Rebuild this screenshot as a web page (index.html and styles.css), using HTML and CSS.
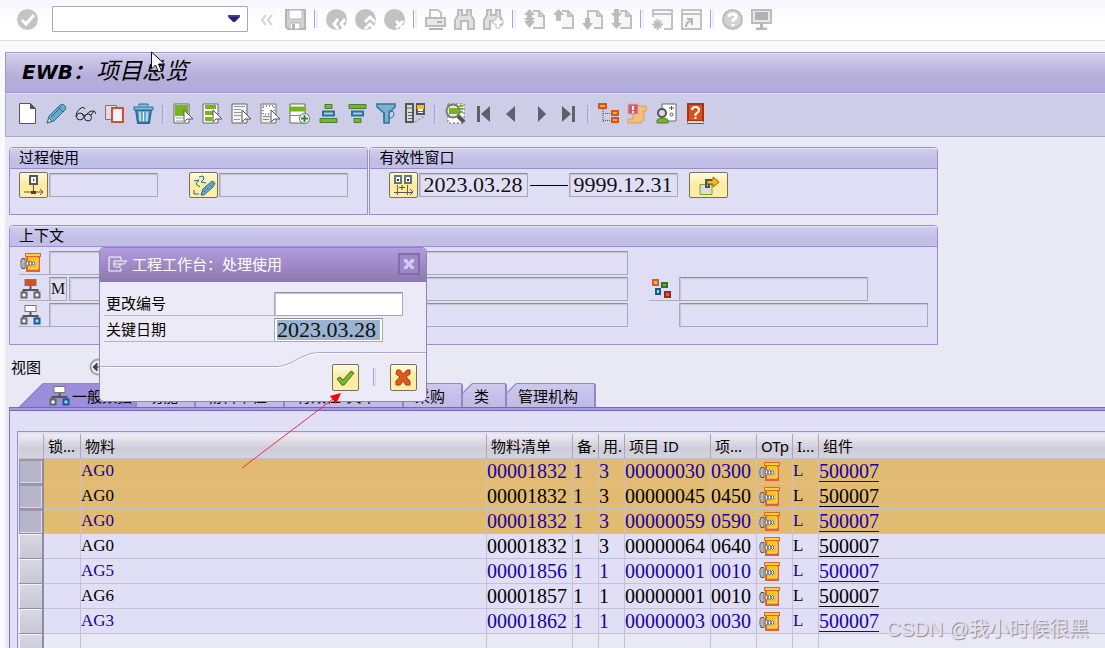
FILE: index.html
```html
<!DOCTYPE html>
<html lang="zh-CN">
<head>
<meta charset="utf-8">
<title>EWB：项目总览</title>
<link rel="stylesheet" href="styles.css">
</head>
<body>
<svg class="sprite" aria-hidden="true">
  <symbol id="material" viewBox="0 0 21 21">
    <path d="M5 1h16v4h-1v15H6V5H5z" fill="#e0652c"/><path d="M6 2h14v2H6z" fill="#ffd23c"/><path d="M8 5h10v12H8z" fill="#fcc31a"/><path d="M18 6v11H8" fill="none" stroke="#ffe68a"/>
    <path d="M5 9h9l2 2-2 3H5z" fill="#fff" /><path d="M2 6.500h3v10H2l-1-3V9z" fill="#e2e2e2" stroke="#555"/><path d="M3 7v9" stroke="#888"/>
    <g fill="#eee" stroke="#555"><ellipse cx="7.500" cy="11.500" rx="1.500" ry="2.500"/><ellipse cx="10.500" cy="11.500" rx="1.500" ry="2.300"/><ellipse cx="13.500" cy="11.500" rx="1.300" ry="2"/></g>
  </symbol>
  <symbol id="hierarchy" viewBox="0 0 21 21">
    <path d="M10.500 8v4M3.500 15v-3h14v3" fill="none" stroke="#555" stroke-width="2"/>
    <rect x="5" y="1.500" width="11" height="6" fill="currentColor" stroke="#777"/><rect x="1.500" y="14.500" width="5" height="5" fill="#fff" stroke="#666" stroke-width="2"/>
  </symbol>
  <symbol id="page-up" viewBox="0 0 21 21"><path d="M9 2h6l5 5v12H9" fill="#f7f7f8" stroke="#c0c0c0" stroke-width="2"/><path d="M15 1v6h6" fill="none" stroke="#c0c0c0" stroke-width="2"/></symbol>
</svg>

<header class="system-bar">
  <button aria-label="确认"><svg viewBox="0 0 21 21"><circle cx="10.500" cy="10.500" r="10.500" fill="#c4c4c4"/><path d="M5 11l4 4 8-9" fill="none" stroke="#fff" stroke-width="3"/></svg></button>
  <label class="command"><input aria-label="命令"><svg viewBox="0 0 12 8"><path d="M0 0h12v2l-5 5H5L0 2z" fill="#4d3d8f"/><path d="M1 2h10L6 7z" fill="#2e1d68"/></svg></label>
  <button class="collapse" aria-label="收起"><svg viewBox="0 0 13 21"><path d="M6 6l-4 5 4 5M12 6l-4 5 4 5" fill="none" stroke="#d2d2d2" stroke-width="2"/></svg></button>
  <button aria-label="保存"><svg viewBox="0 0 21 21"><path d="M1 1h19v19H3l-2-2z" fill="#d2d2d2" stroke="#b5b5b5" stroke-width="2"/><path d="M4 1h13v9H4z" fill="#fff" stroke="#b8b8b8"/><path d="M5 14h10v6H5z" fill="#fff" stroke="#b5b5b5"/><path d="M7 15h3v5H7z" fill="#b5b5b5"/></svg></button>
  <i class="sep"></i>
  <button aria-label="返回"><svg viewBox="0 0 21 21"><circle cx="10.500" cy="10.500" r="10.500" fill="#c2c2c2"/><path d="M12 10l-4 5 4 5M19 10l-4 5 4 5" fill="none" stroke="#fff" stroke-width="3"/></svg></button>
  <button aria-label="退出"><svg viewBox="0 0 21 21"><circle cx="10.500" cy="10.500" r="10.500" fill="#c2c2c2"/><path d="M10 13l5-5 5 5M10 20l5-5 5 5" fill="none" stroke="#fff" stroke-width="3"/></svg></button>
  <button aria-label="取消"><svg viewBox="0 0 21 21"><circle cx="10.500" cy="10.500" r="10.500" fill="#c2c2c2"/><path d="M12 12l7 7M19 12l-7 7" stroke="#fff" stroke-width="3"/></svg></button>
  <i class="sep"></i>
  <button aria-label="打印"><svg viewBox="0 0 21 21"><path d="M5 9V1h8l3 3v5" fill="#fff" stroke="#c2c2c2" stroke-width="2"/><path d="M1 9h19v8H1z" fill="#e8e8e8" stroke="#bcbcbc" stroke-width="2"/><path d="M12 13h5M4 20h14" stroke="#b2b2b2" stroke-width="2"/></svg></button>
  <button aria-label="查找"><svg viewBox="0 0 21 21"><path d="M4 1h4v5h5V1h4v5l3 5v9h-6v-8H7v8H1v-9l3-5z" fill="#e0e0e0" stroke="#bcbcbc" stroke-width="2"/></svg></button>
  <button aria-label="继续查找"><svg viewBox="0 0 21 21"><path d="M4 1h4v5h5V1h4v5l2 5v5h-5v-4H7v8H1v-9l3-5z" fill="#e0e0e0" stroke="#bcbcbc" stroke-width="2"/><path d="M14 8h3v3h3v4h-3v4h-4v-4h-3v-4h3V8z" fill="#fff" stroke="#bcbcbc"/></svg></button>
  <i class="sep"></i>
  <button aria-label="首页"><svg viewBox="0 0 21 21"><use href="#page-up"/><path d="M5.500 0l5.500 6H8v3h3l-3 3h3l-5.500 7L0 12h3L0 9h3V6H0z" fill="#bbb"/></svg></button>
  <button aria-label="上一页"><svg viewBox="0 0 21 21"><use href="#page-up"/><path d="M5.500 0l5.500 6H8v6H3V6H0z" fill="#bbb"/></svg></button>
  <button aria-label="下一页"><svg viewBox="0 0 21 21"><path d="M6 9V2h9l5 5v12h-8" fill="#f7f7f8" stroke="#c0c0c0" stroke-width="2"/><path d="M15 1v6h6" fill="none" stroke="#c0c0c0" stroke-width="2"/><path d="M3 9h5v5h3l-5.500 7L0 14h3z" fill="#bbb"/></svg></button>
  <button aria-label="末页"><svg viewBox="0 0 21 21"><use href="#page-up"/><path d="M3 0h5v4h3l-4 5h1v5h3l-5.500 6L0 14h3V9h1L0 4h3z" fill="#bbb"/></svg></button>
  <i class="sep"></i>
  <button aria-label="新建会话"><svg viewBox="0 0 21 21"><path d="M1 8V1h19v19h-8" fill="#f8f8f8" stroke="#c2c2c2" stroke-width="2"/><path d="M1 5h19" stroke="#c2c2c2" stroke-width="2"/><path d="M5.500 10v11M0 15.500h11M2 12l7 7M9 12l-7 7" stroke="#bcbcbc" stroke-width="2"/></svg></button>
  <button aria-label="快捷方式"><svg viewBox="0 0 21 21"><path d="M1 1h19v19H1z" fill="#f8f8f8" stroke="#c2c2c2" stroke-width="2"/><path d="M1 5h19" stroke="#c2c2c2" stroke-width="2"/><path d="M5 18q0-5 5-6M6 10h5v6" fill="none" stroke="#b5b5b5" stroke-width="2"/></svg></button>
  <i class="sep"></i>
  <button aria-label="帮助"><svg viewBox="0 0 21 21"><circle cx="10.500" cy="10.500" r="9.500" fill="#d2d2d2" stroke="#bcbcbc" stroke-width="2"/><path d="M7 8q0-3 4-3t3 4q-3 1-3 4M11 15v2" fill="none" stroke="#fff" stroke-width="3"/></svg></button>
  <button aria-label="布局"><svg viewBox="0 0 21 21"><path d="M1 1h19v13H1z" fill="#e8e8e8" stroke="#bcbcbc" stroke-width="2"/><path d="M4 3h13v8H4z" fill="#b2b2b2"/><path d="M10.500 14v5M5 20h11" stroke="#b8b8b8" stroke-width="3"/></svg></button>
</header>

<div class="screen">
  <div class="title-bar"><h1>EWB：<span>项目总览</span></h1></div>
  <nav class="app-bar" aria-label="应用工具栏">
    <button aria-label="新建"><svg viewBox="0 0 21 21"><path d="M2.500.500h11l5 5v15h-16z" fill="#fff" stroke="#555" stroke-width="1"/><path d="M13 0v6h6z" fill="#555"/></svg></button>
    <button aria-label="更改"><svg viewBox="0 0 21 21"><path d="M1 20l2-7L14 2l3-1 3 3-1 3L8 18z" fill="#6ba7c6" stroke="#2b78a4"/><path d="M5 14L15 4M12 4l5 5" stroke="#296c96"/><path d="M1 20l2-5 3 3z" fill="#eee" stroke="#356e93"/></svg></button>
    <button aria-label="显示"><svg viewBox="0 0 21 21"><g fill="none" stroke="#222"><path d="M1 14Q1 8 6 5q3-2 4 1M10 13q4-5 7-5 3-1 4 3"/><circle cx="5" cy="13.500" r="3.500"/><circle cx="13" cy="14.500" r="3.500"/><path d="M7 11l3 2M16 12l3-4"/></g></svg></button>
    <button aria-label="复制"><svg viewBox="0 0 21 21"><path d="M1.500 2.500h11v14h-11z" fill="#ddd" stroke="#777"/><path d="M8 5h11v14H8z" fill="#f5f3f5" stroke="#cc4f38" stroke-width="2"/></svg></button>
    <button aria-label="删除"><svg viewBox="0 0 21 21"><path d="M3 7h15l-2 13H5z" fill="#6ba7c6" stroke="#226f9d" stroke-width="2"/><path d="M1 4h19v3H1zM6 3V1h9v2" fill="#8bbad2" stroke="#226f9d"/><path d="M7 9v9M10.500 9v9M14 9v9" stroke="#fff"/></svg></button>
    <i class="sep"></i>
    <button aria-label="全选"><svg viewBox="0 0 21 21"><path d="M1 1h15v19H1z" fill="#fff" stroke="#666"/><path d="M2 2h13v11H2z" fill="#76b51b"/><path d="M3 15h7M3 18h7" stroke="#999"/><path d="M11 7v12l3-3h6z" fill="#fff" stroke="#555"/></svg></button>
    <button aria-label="选择块"><svg viewBox="0 0 21 21"><path d="M1 1h15v19H1z" fill="#fff" stroke="#666"/><path d="M3 4h11M3 10h8M3 16h7" stroke="#76b51b" stroke-width="4"/><path d="M11 7v12l3-3h6z" fill="#fff" stroke="#555"/></svg></button>
    <button aria-label="取消选择"><svg viewBox="0 0 21 21"><path d="M1 1h15v19H1z" fill="#f4f4f8" stroke="#666"/><path d="M3 3.500h11M3 6.500h7M3 9.500h7M3 12.500h7M3 16.500h6" stroke="#999"/><path d="M11 7v12l3-3h6z" fill="#fff" stroke="#555"/></svg></button>
    <button aria-label="选择区域"><svg viewBox="0 0 21 21"><path d="M1 1h15v19H1z" fill="#eee" stroke="#777"/><path d="M3 3h11v8H3z" fill="#fff" stroke="#333" stroke-dasharray="1 2"/><path d="M3 13.500h7M3 16.500h6" stroke="#888"/><path d="M11 7v12l3-3h6z" fill="#fff" stroke="#555"/></svg></button>
    <button aria-label="插入行"><svg viewBox="0 0 21 21"><path d="M1 1h15v19H1z" fill="#fff" stroke="#666"/><path d="M0 6h17" stroke="#76b51b" stroke-width="5"/><path d="M1 12.500h14" stroke="#888"/><circle cx="15.500" cy="15.500" r="5" fill="#fff" stroke="#347f49"/><path d="M15.500 12v7M12 15.500h7" stroke="#347f49" stroke-width="2"/></svg></button>
    <button aria-label="升序"><svg viewBox="0 0 21 21"><path d="M7 1.500h7v4H7zM2 15.500h17v4H2z" fill="#7db71d" stroke="#477d35"/><path d="M5 8.500h11v4H5z" fill="#a9cbe0" stroke="#287599" stroke-width="2"/></svg></button>
    <button aria-label="降序"><svg viewBox="0 0 21 21"><path d="M2 1.500h17v4H2zM7 15.500h7v4H7z" fill="#7db71d" stroke="#477d35"/><path d="M5 8.500h11v4H5z" fill="#a9cbe0" stroke="#287599" stroke-width="2"/></svg></button>
    <button aria-label="筛选"><svg viewBox="0 0 21 21"><path d="M1 1h18v3l-6 6v10H8V10L1 4z" fill="#7eb1d0" stroke="#287599" stroke-width="1.500"/><path d="M12 8h3q3 0 3 3t-3 4h-2M8 9v10" fill="none" stroke="#287599"/></svg></button>
    <button aria-label="列设置"><svg viewBox="0 0 21 21"><path d="M1 1h7v18H1z" fill="#ddd" stroke="#555" stroke-width="2"/><path d="M1 5h7M3 9.500h4M3 12.500h4M3 15.500h4" stroke="#666"/><path d="M12 1h7v10h-7z" fill="#fff" stroke="#555" stroke-width="2"/><path d="M12 2h7v4h-7z" fill="#fbb526"/><path d="M13 8.500h5" stroke="#666"/><path d="M10 19l10-6" stroke="#777" stroke-dasharray="2"/></svg></button>
    <i class="sep"></i>
    <button aria-label="详细信息"><svg viewBox="0 0 21 21"><path d="M3 1h16v19H3z" fill="#fff" stroke="#666" stroke-dasharray="2"/><path d="M14 3h4M14 6h4M14 9h4" stroke="#76b51b" stroke-width="2"/><circle cx="8" cy="8" r="6.500" fill="#e5f0e2" stroke="#777" stroke-width="2"/><path d="M4 5h9v6H4z" fill="#76b51b"/><path d="M13 13l6 6" stroke="#555" stroke-width="4"/></svg></button>
    <button aria-label="第一个"><svg viewBox="0 0 21 21"><path d="M3 3h3v16H3zM16 3v16l-9-8z" fill="#5f6069"/></svg></button>
    <button class="nav" aria-label="上一个"><svg viewBox="0 0 20 21"><path d="M12 3v16l-9-8z" fill="#5f6069"/></svg></button>
    <button class="nav" aria-label="下一个"><svg viewBox="0 0 20 21"><path d="M7 3v16l8-8z" fill="#5f6069"/></svg></button>
    <button class="nav" aria-label="最后一个"><svg viewBox="0 0 20 21"><path d="M3 3v16l9-8zM13 3h3v16h-3z" fill="#5f6069"/></svg></button>
    <i class="sep"></i>
    <button aria-label="结构"><svg viewBox="0 0 21 21"><path d="M5 6v14M5 10.500h9M5 17.500h9" stroke="#555" stroke-dasharray="1 1"/><path d="M1 1h7v4H1zM14 8h6v4h-6zM14 15h6v4h-6z" fill="#ffb514" stroke="#d65220" stroke-width="2"/></svg></button>
    <button aria-label="日志"><svg viewBox="0 0 21 21"><path d="M11 3h8v5h-3l1 3v5l-3 4H1v-4h5V8z" fill="#f3c077" stroke="#d99e54"/><path d="M1 1h10v10H1z" fill="#cf5b6c" stroke="#e5a3aa"/><path d="M6 3v4M6 8v2" stroke="#fff" stroke-width="2"/></svg></button>
    <button aria-label="用户"><svg viewBox="0 0 21 21"><path d="M6 1h14v17H6z" fill="#fff" stroke="#666" stroke-width="1"/><path d="M15.500 3v4M13 5h5" stroke="#555"/><circle cx="15.500" cy="11.500" r="1.500" fill="none" stroke="#555"/><circle cx="6" cy="10" r="4" fill="#ddd" stroke="#555" stroke-width="2"/><path d="M1 20v-3l3-2h5l3 2v3z" fill="#76b51b" stroke="#477d35"/></svg></button>
    <button aria-label="应用帮助"><svg viewBox="0 0 21 21"><path d="M3 1h15v17H3z" fill="#d85318" stroke="#a83116" stroke-width="2"/><path d="M3 19h15" stroke="#ddd" stroke-width="2"/><path d="M2 20.500h17" stroke="#b13c20"/><path d="M7 7q0-3 3.500-3T14 7q0 2-3.500 4v2M10.500 14v2" fill="none" stroke="#fff" stroke-width="2"/></svg></button>
  </nav>

  <main>
    <div class="groups">
      <section class="group usage">
        <h2>过程使用</h2>
        <div class="line">
          <button class="gold" aria-label="参数有效性"><svg viewBox="0 0 24 21"><path d="M8 1h7v8H8z" fill="#fff" stroke="#555" stroke-width="2"/><path d="M11 4h1v2h-1" stroke="#777"/><path d="M11.500 10v7" stroke="#d72a20"/><path d="M2 17h19M18 14l3 3-3 3" fill="none" stroke="#555"/><path d="M9 16h5v3H9z" fill="#7b2f2b"/></svg></button>
          <input class="w-109" aria-label="参数" readonly>
          <button class="gold second" aria-label="更改编号"><svg viewBox="0 0 24 21"><path d="M2 6l5-1-3 4 4 3M7 2l4-1 1 3-3 3 5 1M2 15v4h5" fill="none" stroke="#285f9b"/><path d="M9 20l2-6 9-8 3 2-2 4-9 8z" fill="#6ba7c6" stroke="#246c96"/><path d="M12 17l9-9" stroke="#246c96" stroke-dasharray="2"/></svg></button>
          <input class="w-129" aria-label="更改" readonly>
        </div>
      </section>
      <section class="group validity">
        <h2>有效性窗口</h2>
        <div class="line">
          <button class="gold" aria-label="日期范围"><svg viewBox="0 0 24 21"><path d="M3 1h6v7H3zM13 1h6v7h-6z" fill="#fff" stroke="#667585" stroke-width="2"/><path d="M6 4v2M16 4v2" stroke="#333" stroke-width="2"/><path d="M5.500 10v10M15.500 10v10" stroke="#c33a30"/><path d="M7 12.500h6M10 10v5M2 17.500h18M18 14l3 3-3 3" fill="none" stroke="#555" stroke-width="1"/></svg></button>
          <input class="w-109" aria-label="开始日期" value="2023.03.28" readonly>
          <span class="dash"></span>
          <input class="w-109" aria-label="结束日期" value="9999.12.31" readonly>
          <button class="gold wide" aria-label="转到"><svg viewBox="0 0 24 21"><path d="M3 9.500h12v10H3z" fill="#ddd" stroke="#70a91d"/><path d="M10 5h6V2l6 5-6 5V9h-6z" fill="#fcb813" stroke="#8a650d"/><path d="M15 5H9v7h3V9" fill="none" stroke="#555" stroke-width="2"/></svg></button>
        </div>
      </section>
    </div>

    <section class="group context">
      <h2>上下文</h2>
      <div class="context-grid">
        <span class="cue"><svg viewBox="0 0 21 21"><use href="#material"/></svg></span>
        <input aria-label="物料" readonly>
        <span class="cue red span-start"><svg viewBox="0 0 21 21"><use href="#hierarchy"/><path d="M14.500 14.500h5v5h-5z" fill="#fff" stroke="#666" stroke-width="2"/></svg></span>
        <div class="pair"><input class="tiny" aria-label="类型" value="M" readonly><input aria-label="对象" readonly></div>
        <span class="cue aux"><svg viewBox="0 0 21 21"><g stroke-width="2"><path d="M3 2h5v5H3z" fill="#ffc83d" stroke="#dc5a20"/><path d="M12 5h5v4h-5z" fill="#7db722" stroke="#34713d"/><path d="M6 11h4v5H6z" fill="#b8d7e9" stroke="#145b88"/><path d="M15 14h5v5h-5z" fill="#e1652d" stroke="#a72516"/></g></svg></span>
        <input class="short" aria-label="组件" readonly>
        <span class="cue pale span-start"><svg viewBox="0 0 21 21"><use href="#hierarchy"/><path d="M14.500 14.500h5v5h-5z" fill="#a9d2e8" stroke="#145f92" stroke-width="2"/></svg></span>
        <input aria-label="下级" readonly>
        <input class="last" aria-label="描述" readonly>
      </div>
    </section>

    <div class="view"><span>视图</span><svg viewBox="0 0 18 18"><circle cx="9" cy="9" r="7.500" fill="#eceaf0" stroke="#a5a4ab" stroke-width="2"/><path d="M4 9l4-4v8zM8 9h6" fill="#444" stroke="#444"/></svg></div>

    <div class="tabs" role="tablist">
      <button class="tab active" role="tab"><svg viewBox="0 0 21 21"><use href="#hierarchy"/><path d="M14.500 14.500h5v5h-5z" fill="#a9d2e8" stroke="#145f92" stroke-width="2"/></svg>一般数据</button>
      <button class="tab t2" role="tab">功能</button>
      <button class="tab t4" role="tab">物料单位</button>
      <button class="tab t6" role="tab">有效性/文本</button>
      <button class="tab t2" role="tab">采购</button>
      <button class="tab t1" role="tab">类</button>
      <button class="tab t4" role="tab">管理机构</button>
    </div>

    <div class="tab-panel">
      <div class="table-frame">
        <table>
          <colgroup><col class="c-sel"><col class="c-lock"><col class="c-mat"><col class="c-num"><col class="c-one"><col class="c-one"><col class="c-num"><col class="c-pos"><col class="c-icon"><col class="c-one"><col></colgroup>
          <thead><tr><th></th><th>锁...</th><th>物料</th><th>物料清单</th><th>备.</th><th>用.</th><th>项目 ID</th><th>项...</th><th>OTp</th><th>I...</th><th>组件</th></tr></thead>
          <tbody>
            <tr class="picked blue"><td></td><td></td><td class="mat">AG0</td><td>00001832</td><td>1</td><td>3</td><td>00000030</td><td>0300</td><td><svg viewBox="0 0 21 21"><use href="#material"/></svg></td><td class="mat">L</td><td><a href="#">500007</a></td></tr>
            <tr class="picked"><td></td><td></td><td class="mat">AG0</td><td>00001832</td><td>1</td><td>3</td><td>00000045</td><td>0450</td><td><svg viewBox="0 0 21 21"><use href="#material"/></svg></td><td class="mat">L</td><td><a href="#">500007</a></td></tr>
            <tr class="picked blue"><td></td><td></td><td class="mat">AG0</td><td>00001832</td><td>1</td><td>3</td><td>00000059</td><td>0590</td><td><svg viewBox="0 0 21 21"><use href="#material"/></svg></td><td class="mat">L</td><td><a href="#">500007</a></td></tr>
            <tr><td></td><td></td><td class="mat">AG0</td><td>00001832</td><td>1</td><td>3</td><td>00000064</td><td>0640</td><td><svg viewBox="0 0 21 21"><use href="#material"/></svg></td><td class="mat">L</td><td><a href="#">500007</a></td></tr>
            <tr class="blue"><td></td><td></td><td class="mat">AG5</td><td>00001856</td><td>1</td><td>1</td><td>00000001</td><td>0010</td><td><svg viewBox="0 0 21 21"><use href="#material"/></svg></td><td class="mat">L</td><td><a href="#">500007</a></td></tr>
            <tr><td></td><td></td><td class="mat">AG6</td><td>00001857</td><td>1</td><td>1</td><td>00000001</td><td>0010</td><td><svg viewBox="0 0 21 21"><use href="#material"/></svg></td><td class="mat">L</td><td><a href="#">500007</a></td></tr>
            <tr class="blue"><td></td><td></td><td class="mat">AG3</td><td>00001862</td><td>1</td><td>1</td><td>00000003</td><td>0030</td><td><svg viewBox="0 0 21 21"><use href="#material"/></svg></td><td class="mat">L</td><td><a href="#">500007</a></td></tr>
            <tr class="empty"><td></td><td></td><td></td><td></td><td></td><td></td><td></td><td></td><td></td><td></td><td></td></tr>
          </tbody>
        </table>
      </div>
    </div>
  </main>
</div>

<div class="dialog" role="dialog" aria-labelledby="dialog-title">
  <div class="dialog-title">
    <svg viewBox="0 0 20 16"><path d="M13 4V1H1v14h12v-3M6 5h13l-3 3h-4M6 8h6v3H7M6 5v6" fill="none" stroke="#fff"/></svg>
    <h2 id="dialog-title">工程工作台：处理使用</h2>
    <button aria-label="关闭"><svg viewBox="0 0 22 22"><path d="M1 1h20v20H1z" fill="#9c88c8" stroke="#806ea8" stroke-width="2"/><path d="M6 6h3l2 3 2-3h3v3l-3 2 3 3v2h-3l-2-3-2 3H6v-2l3-3-3-2z" fill="#d5c8f7"/></svg></button>
  </div>
  <div class="dialog-fields">
    <label for="change-no">更改编号</label><input id="change-no" class="w-129">
    <label for="key-date">关键日期</label><input id="key-date" class="w-109 selected" value="2023.03.28">
  </div>
  <svg class="swoosh" viewBox="0 0 326 17"><path d="M0 14.500h178q7 0 19-7t23-7h106V17H0z" fill="#ebeaf6"/><path d="M0 14.500h178q7 0 19-7t23-7h106" fill="none" stroke="#aaa4cc"/><path d="M0 15.500h178q8 0 20-7t23-7h105" fill="none" stroke="#fff"/></svg>
  <div class="dialog-actions">
    <button class="gold square" aria-label="继续"><svg viewBox="0 0 21 21"><path d="M2 12l3-2 3 3 8-9 3 2L9 18H7z" fill="#7db722" stroke="#34713d"/></svg></button>
    <i class="sep"></i>
    <button class="gold square" aria-label="取消"><svg viewBox="0 0 21 21"><path d="M4 3h3l3 4 4-4h3v4l-4 3 4 4v4h-4l-3-4-3 4H3v-4l4-4-4-3z" fill="#e15a1b" stroke="#a43a22"/></svg></button>
  </div>
</div>

<svg class="callout" viewBox="0 0 101 77" aria-hidden="true"><path d="M1 76L92 7" stroke="#f22c3b"/><path d="M100 1L95 12 89 4z" fill="#f00"/></svg>
<svg class="pointer" viewBox="0 0 14 23" aria-hidden="true"><path d="M.500 1v17l4-4 3 7 3-1-3-7h6z" fill="#fff" stroke="#111"/></svg>
<div class="watermark">CSDN @我小时候很黑</div>
</body>
</html>
```
FILE: styles.css
```css
* { box-sizing: border-box; }

html { height: 100%; overflow: hidden; }

body {
  position: relative;
  height: 100%;
  margin: 0;
  overflow: hidden;
  background: #f8f8fd;
  color: #000;
  font: 15px/20px "Noto Sans", "Noto Sans CJK SC", sans-serif;
}

h1, h2 { margin: 0; font-size: 15px; font-weight: 400; }
svg { display: block; flex: none; }
.sprite { display: none; }
button { padding: 0; border: 0; background: none; color: inherit; font: inherit; flex: none; }

input {
  min-width: 0;
  height: 24px;
  padding: 0 3px;
  border: 1px solid #aaa9b3;
  border-top-color: #918f9d;
  border-radius: 1px;
  outline: 0;
  background: #e1dff5;
  box-shadow: inset 1px 1px 1px #c5c3d2;
  color: #111;
  font: 22px/20px "Liberation Serif", serif;
}

.w-109 { width: 109px; }
.w-129 { width: 129px; }

.sep {
  flex: none;
  width: 3px;
  height: 18px;
  border-left: 1px solid #a99fd8;
  border-right: 1px solid #d8d3f2;
}

/* System toolbar */
.system-bar {
  display: flex;
  align-items: center;
  gap: 8px;
  height: 41px;
  padding: 0 17px 2px;
  border-bottom: 1px solid #dddce9;
  background: linear-gradient(#f8f7fd, #fff 60%);
}
.system-bar svg, .app-bar svg { width: 21px; height: 21px; }
.system-bar .sep { width: 4px; border-right-width: 2px; border-right-color: #f0edfb; }
.command { position: relative; flex: none; width: 196px; height: 26px; margin: 0 4px 0 6px; }
.command input { width: 100%; height: 26px; background: #fff; border: 1px solid #aaa9b2; box-shadow: none; }
.system-bar .command svg { position: absolute; top: 9px; right: 8px; width: 12px; height: 8px; }
.system-bar .collapse { margin-right: 4px; }
.system-bar .collapse svg { width: 13px; }

/* Screen header */
.screen { margin: 11px 0 0 5px; background: #e9e8f5; }
.title-bar {
  display: flex;
  align-items: center;
  height: 41px;
  padding: 0 0 3px 16px;
  border: 1px solid #9f98c8;
  border-right: 0;
  background: linear-gradient(#d2ceeb, #b5afda 60%, #b1abdc);
  box-shadow: inset 0 1px #e8e6f6;
}
h1 { font: italic 700 20px/28px "DejaVu Sans", "Noto Sans CJK SC", sans-serif; }
h1 span { padding-left: 3px; font-size: 23px; font-weight: 400; }
.app-bar {
  display: flex;
  align-items: center;
  gap: 8px;
  height: 44px;
  padding: 0 11px 2px;
  border: 1px solid #aca7cd;
  border-top: 0;
  border-right: 0;
  background: #cecde8;
  box-shadow: inset 0 1px #e3e1f2;
}
.app-bar .nav svg { width: 20px; }

/* Group boxes */
main { padding: 10px 0 0 4px; }
.groups { display: flex; gap: 1px; max-width: 929px; }
.group {
  border: 1px solid #9690ce;
  border-radius: 4px 4px 0 0;
  background: #e0def4;
}
.group h2 {
  height: 21px;
  padding-left: 9px;
  border-bottom: 1px solid #9690ce;
  border-radius: 3px 3px 0 0;
  background: linear-gradient(#d2ceee, #c2bfe7 60%);
  box-shadow: inset 0 1px #e6e3f7;
  line-height: 18px;
}
.usage { flex: 359 1 0; }
.validity { flex: 569 1 0; }
.line { display: flex; align-items: center; gap: 1px; height: 45px; padding: 0 9px 13px; }
.validity .line { padding-left: 19px; }
.gold {
  display: flex;
  align-items: center;
  justify-content: center;
  width: 29px;
  height: 26px;
  border: 1px solid #77705f;
  border-radius: 2px;
  background: linear-gradient(#fffbe0, #ffeb9c 50%, #ffefab);
}
.gold svg { width: 24px; height: 21px; }
.gold.second { margin-left: 30px; }
.gold.wide { width: 39px; margin-left: 10px; }
.dash { width: 38px; height: 1px; margin: 0 0 0 1px; background: #000; }

.context { max-width: 929px; margin-top: 10px; }
.context-grid {
  display: grid;
  grid-template-columns: 30px minmax(0, 579px) 51px minmax(0, 249px);
  grid-auto-rows: 24px;
  row-gap: 2px;
  padding: 4px 9px 17px;
}
.context-grid > input:not(.short):not(.last), .pair { grid-column: 2; }
.cue { display: flex; align-items: center; padding-left: 1px; border-bottom: 1px solid #aeadba; }
.cue svg { width: 21px; height: 21px; }
.cue.red { color: #d94d20; }
.cue.pale { color: #fff; }
.span-start { grid-column: 1; }
.aux { grid-column: 3; margin-left: 21px; }
.short { grid-column: 4; width: 189px; }
.last { grid-column: 4; }
.pair { display: flex; gap: 2px; }
.pair input { flex: 1; }
.pair .tiny { flex: none; width: 18px; padding: 0 0 0 1px; font-size: 16px; }

.view { display: flex; align-items: center; gap: 48px; height: 38px; padding: 6px 0 0 2px; }
.view svg { width: 18px; height: 18px; }

/* Tabs */
.tabs { display: flex; height: 24px; padding-left: 10px; }
.tab {
  height: 24px;
  padding: 0 0 0 11px;
  border: solid #9087c4;
  border-width: 1px 2px 0 0;
  border-radius: 0 3px 0 0;
  background: linear-gradient(135deg, #9087c4 7px, transparent 8px) border-box, linear-gradient(#cdc9ed, #bfb9e7);
  clip-path: polygon(0 9px, 9px 0, 100% 0, 100% 100%, 0 100%);
  line-height: 22px;
  text-align: left;
  white-space: nowrap;
}
.tab.active {
  display: flex;
  align-items: center;
  gap: 2px;
  width: 118px;
  padding-left: 30px;
  background: linear-gradient(135deg, #7468bb 17px, transparent 18px) border-box, #9c8edc;
  clip-path: polygon(0 100%, 24px 0, 100% 0, 100% 100%);
}
.tab svg { width: 21px; height: 21px; color: #fff; }
.t1 { width: 44px; }
.t2 { width: 59px; }
.t4 { width: 89px; }
.t6 { width: 119px; }
.tab-panel {
  padding: 23px 0 0 7px;
  border-top: 1px solid #7468bb;
  border-left: 1px solid #7f75c2;
  background: linear-gradient(#a79de1 0 2px, #7468bb 2px 3px, #e0dff5 3px);
}
.table-frame { padding: 2px 0 0 1px; border-top: 1px solid #9690da; border-left: 1px solid #9690da; }

table { width: 100%; border-spacing: 0; table-layout: fixed; }
.c-sel { width: 25px; }
.c-lock { width: 37px; }
.c-mat { width: 406px; }
.c-num { width: 86px; }
.c-one { width: 26px; }
.c-pos { width: 46px; }
.c-icon { width: 36px; }
th, td { height: 25px; padding: 0; overflow: hidden; text-align: left; white-space: nowrap; }
th {
  padding-left: 4px;
  border-right: 1px solid #aaa7bd;
  border-bottom: 1px solid #c1bfce;
  background: linear-gradient(#eeedf2, #cfccd9 60%, #d5d3df);
  font-weight: 400;
}
td {
  border-right: 1px solid #c3c0da;
  border-bottom: 1px solid #c3c0da;
  background: #e1dff5;
  font: 20px/22px "Liberation Serif", serif;
}
td.mat { font-size: 17px; }
td svg { width: 21px; height: 21px; margin-left: 2px; }
.picked td { background: #e1bb72; }
.blue td { color: #1800a8; }
.empty td { background: #e9e8f5; }
th:last-child, td:last-child { border-right: 0; }
tbody td:first-child {
  border-right: 2px solid #8e8ba4;
  border-bottom: 1px solid #918fa3;
  background: linear-gradient(#dad8e3, #c8c6d6);
  box-shadow: inset 1px 1px #f5f4fa;
}
.picked td:first-child { background: #b8b5ca; box-shadow: inset 1px 2px #9997ac, inset -1px -1px #dfddea; }
a { color: inherit; text-decoration: underline; text-decoration-thickness: 1px; text-underline-offset: 3px; }

/* Dialog */
.dialog {
  position: absolute;
  top: 247px;
  left: 99px;
  width: 328px;
  border: 1px solid #8f86b4;
  border-radius: 5px;
  background: #ebeaf6;
}
.dialog-title {
  display: flex;
  align-items: center;
  gap: 4px;
  height: 34px;
  padding: 0 6px 2px 8px;
  border-radius: 4px 4px 0 0;
  background: linear-gradient(#b29bdf, #8c78ae);
  color: #fff;
}
.dialog-title > svg { width: 20px; height: 16px; }
.dialog-title h2 { flex: 1; }
.dialog-title button svg { width: 22px; height: 22px; }
.dialog-fields {
  display: grid;
  grid-template-columns: 170px 1fr;
  grid-auto-rows: 24px;
  row-gap: 2px;
  padding: 10px 4px;
}
.dialog-fields label { padding: 1px 2px; border-bottom: 1px solid #b7b5c2; }
.dialog-fields input { background-color: #fff; }
.dialog-fields .selected { padding: 1px 2px; background: linear-gradient(#99b3d1, #99b3d1) content-box, #fff; box-shadow: none; }
.swoosh { width: 326px; height: 17px; }
.dialog-actions { display: flex; align-items: center; justify-content: flex-end; gap: 14px; height: 32px; padding: 0 9px 16px; }
.square { width: 27px; height: 27px; }
.square svg { width: 21px; height: 21px; }

/* Overlays */
.callout { position: absolute; left: 241px; top: 392px; width: 101px; height: 77px; }
.pointer { position: absolute; left: 151px; top: 51px; width: 14px; height: 23px; }
.watermark {
  position: absolute;
  right: 16px;
  bottom: 5px;
  color: #e4e3ec;
  font: 20px/28px "Liberation Sans", "Noto Sans CJK SC", sans-serif;
  text-shadow: 1px 1px 1px #85848f;
}
```
